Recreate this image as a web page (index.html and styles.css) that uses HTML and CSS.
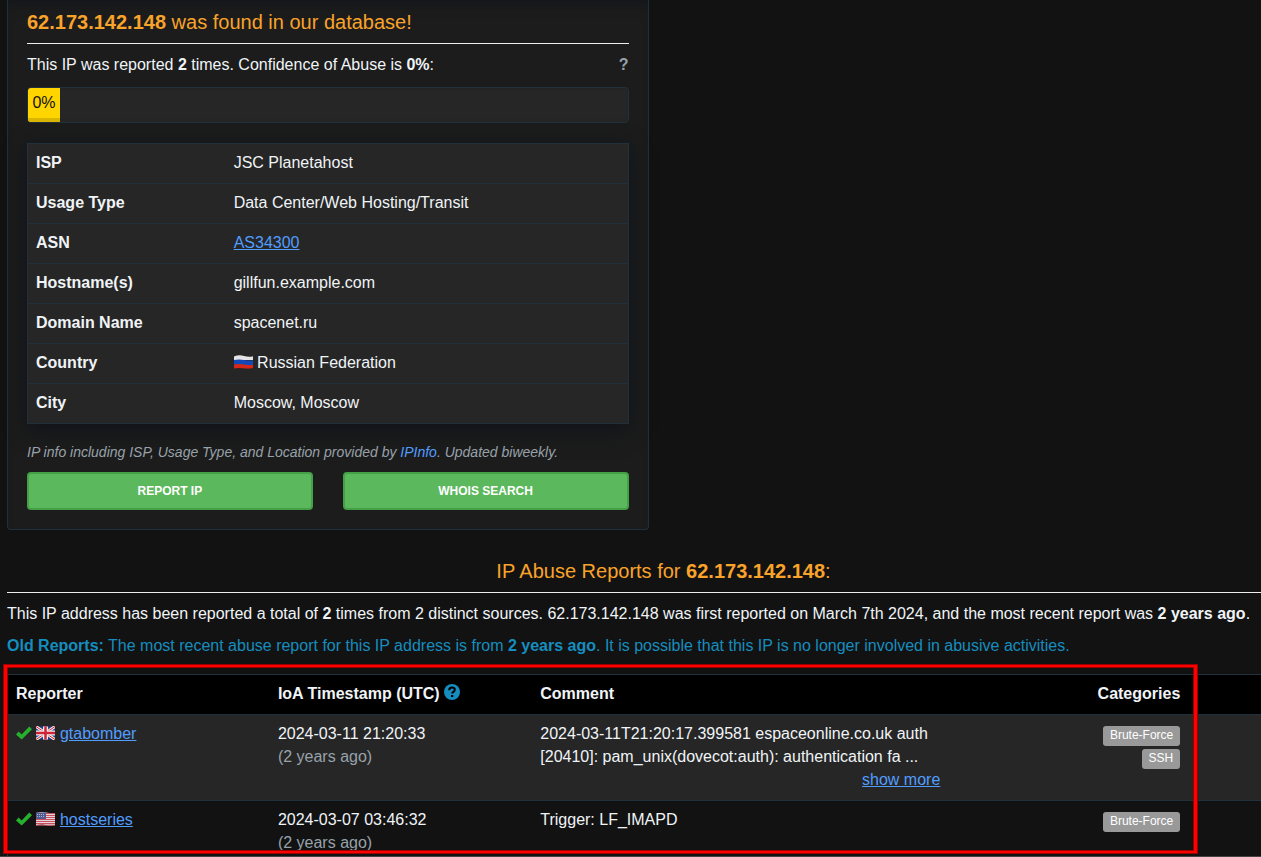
FILE: index.html
```html
<!DOCTYPE html>
<html lang="en">
<head>
  <meta charset="utf-8">
  <title>62.173.142.148 | IP Abuse Reports</title>
  <link rel="stylesheet" href="styles.css">
</head>
<body>
  <main class="container">
    <div class="row">
      <section class="well">
        <h3 class="title"><b>62.173.142.148</b> was found in our database!</h3>
        <div class="confidence">
          <p>This IP was reported <b>2</b> times. Confidence of Abuse is <b>0%</b>:</p>
          <b class="help">?</b>
        </div>
        <div class="progress">
          <div class="progress-bar">0%</div>
        </div>

        <table class="info">
          <tr>
            <th>ISP</th>
            <td>JSC Planetahost</td>
          </tr>
          <tr>
            <th>Usage Type</th>
            <td>Data Center/Web Hosting/Transit</td>
          </tr>
          <tr>
            <th>ASN</th>
            <td><a href="#">AS34300</a></td>
          </tr>
          <tr>
            <th>Hostname(s)</th>
            <td>gillfun.example.com</td>
          </tr>
          <tr>
            <th>Domain Name</th>
            <td>spacenet.ru</td>
          </tr>
          <tr>
            <th>Country</th>
            <td>
              <svg class="flag" viewBox="0 0 19 14">
                <path fill="#e4e4e4" d="M0 1.500Q5-.5 10 1t9 .3V5H0z"/>
                <path fill="#1448b8" d="M0 5Q5 4 10 5t9 .2V10H0z"/>
                <path fill="#d62718" d="M0 9.500Q5 8.500 10 9.500t9 .2V13Q14 14 9 13.300T0 13.500z"/>
              </svg>
              Russian Federation
            </td>
          </tr>
          <tr>
            <th>City</th>
            <td>Moscow, Moscow</td>
          </tr>
        </table>

        <p class="note">IP info including ISP, Usage Type, and Location provided by <a href="#">IPInfo</a>. Updated biweekly.</p>
        <div class="buttons">
          <button type="button" class="btn">REPORT IP</button>
          <button type="button" class="btn">WHOIS SEARCH</button>
        </div>
      </section>
    </div>

    <h3 class="title reports-title">IP Abuse Reports for <b>62.173.142.148</b>:</h3>
    <p class="summary">This IP address has been reported a total of <b>2</b> times from 2 distinct sources. 62.173.142.148 was first reported on March 7th 2024, and the most recent report was <b>2 years ago</b>.</p>
    <p class="summary old"><b>Old Reports:</b> The most recent abuse report for this IP address is from <b>2 years ago</b>. It is possible that this IP is no longer involved in abusive activities.</p>

    <div class="reports-wrap">
      <table class="reports">
        <thead>
          <tr>
            <th class="col-reporter">Reporter</th>
            <th class="col-time">IoA Timestamp (UTC)
              <svg class="icon-help" viewBox="0 0 16 16">
                <circle cx="8" cy="8" r="8" fill="#168dbf"/>
                <path d="M5.200 6.200Q5.200 3.500 8 3.500t2.800 2.300Q10.800 7.300 9.300 8 8.200 8.500 8.200 9.500" fill="none" stroke="#000" stroke-width="2"/>
                <path d="M7 11h2.300v2H7z"/>
              </svg>
            </th>
            <th class="col-comment">Comment</th>
            <th class="col-cats">Categories</th>
            <th class="col-actions"></th>
          </tr>
        </thead>
        <tbody>
          <tr>
            <td>
              <svg class="icon-ok" viewBox="0 0 16 14"><path d="M0 8.500 2.600 5.600 5.600 8.500 13.300.5 16 3.200 5.700 13.600z"/></svg>
              <svg class="flag" viewBox="0 0 19 14">
                <path fill="#23408e" d="M0 .5h19v13H0z"/>
                <path stroke="#eee" stroke-width="3" d="M0 .5l19 13M19 .5l-19 13"/>
                <path stroke="#d22" stroke-width="1" d="M0 .5l19 13M19 .5l-19 13"/>
                <path stroke="#eee" stroke-width="5" d="M9.500 .5v13M0 7h19"/>
                <path stroke="#d22239" stroke-width="2.500" d="M9.500 .5v13M0 7h19"/>
              </svg>
              <a href="#">gtabomber</a>
            </td>
            <td>2024-03-11 21:20:33<br><span class="muted">(2 years ago)</span></td>
            <td>
              <div class="comment">2024-03-11T21:20:17.399581 espaceonline.co.uk auth<br>[20410]: pam_unix(dovecot:auth): authentication fa ...
                <a href="#" class="more">show more</a>
              </div>
            </td>
            <td class="cats"><span class="label">Brute-Force</span><span class="label">SSH</span></td>
            <td></td>
          </tr>
          <tr>
            <td>
              <svg class="icon-ok" viewBox="0 0 16 14"><path d="M0 8.500 2.600 5.600 5.600 8.500 13.300.5 16 3.200 5.700 13.600z"/></svg>
              <svg class="flag" viewBox="0 0 19 14">
                <path fill="#e6d5d8" d="M0 1Q5-.5 10 .5t9 .5v12q-5 1-9.500 0T0 13.500z"/>
                <path stroke="#c8505e" stroke-width="1" d="M9 1.500h10M9 3.500h10M9 5.500h10M0 7.500h19M0 9.500h19M0 11.500h19M0 13.200h19"/>
                <path fill="#525a92" d="M0 .5h10v6.500H0z"/>
                <path stroke="#a9aece" stroke-width="1" stroke-dasharray="1 1" d="M1 2.500h8M1 4.500h8"/>
              </svg>
              <a href="#">hostseries</a>
            </td>
            <td>2024-03-07 03:46:32<br><span class="muted">(2 years ago)</span></td>
            <td><div class="comment">Trigger: LF_IMAPD</div></td>
            <td class="cats"><span class="label">Brute-Force</span></td>
            <td></td>
          </tr>
        </tbody>
      </table>
      <div class="highlight"></div>
    </div>
  </main>
</body>
</html>
```
FILE: styles.css
```css
* {
  box-sizing: border-box;
}

body {
  font-family: "Liberation Sans", Arial, sans-serif;
  font-size: 16px;
  line-height: 23px;
  margin: 0;
  height: 100vh;
  overflow: hidden;
  color: #f0f4f7;
  background-color: #121212;
  border-bottom: 1px solid #444;
}

p,
h3 {
  margin: 0;
}

a {
  color: #519dff;
}

/* the content runs on past the right side of the window */
.container {
  margin-left: 7px;
  margin-right: -59px;
}

.row {
  display: grid;
  grid-template-columns: 1fr 1fr;
  gap: 30px;
}

.well {
  padding: 11px 19px 19px;
  background-color: #1c1c1c;
  border: 1px solid #21303b;
  border-top: none;
  border-radius: 0 0 4px 4px;
  box-shadow: inset 0 12px 12px -8px #14161c;
}

.title {
  padding-bottom: 10px;
  border-bottom: 1px solid #eee;
  color: #f9a32a;
  font-size: 20px;
  line-height: 22px;
  font-weight: normal;
}

.confidence {
  display: flex;
  justify-content: space-between;
  margin: 9px 0 11px;
}

.help {
  color: #98a2aa;
}

.progress {
  height: 36px;
  background-color: #262626;
  border: 1px solid #21303b;
  border-radius: 4px;
  overflow: hidden;
  box-shadow: inset 0 1px 2px rgba(0, 0, 0, 0.1);
}

.progress-bar {
  width: 32px;
  height: 100%;
  line-height: 30px;
  text-align: center;
  color: #111;
  background-color: #ffd500;
  box-shadow: inset 0 -4px 0 #dbb600;
}

table {
  width: 100%;
  border-collapse: collapse;
}

th,
td {
  padding: 7px 8px 9px;
  text-align: left;
  vertical-align: top;
}

.info {
  margin-top: 20px;
  background-color: #262626;
  border: 1px solid #21303b;
  box-shadow: 0 5px 20px #0e1219;
}

.info tr {
  border-top: 1px solid #21303b;
}

.info th {
  width: 33%;
}

.note {
  margin: 17px 0 8px;
  color: #98a2aa;
  font-size: 14px;
  font-style: italic;
}

.note a {
  text-decoration: none;
}

.buttons {
  display: grid;
  grid-template-columns: 1fr 1fr;
  gap: 30px;
}

.btn {
  height: 38px;
  font-family: inherit;
  font-size: 12px;
  font-weight: bold;
  color: #fff;
  background-color: #5cb85c;
  border: 2px solid #43a047;
  border-radius: 4px;
  cursor: pointer;
}

.reports-title {
  margin-top: 30px;
  text-align: center;
}

.summary {
  margin-top: 9px;
}

.old {
  color: #168dbf;
}

.reports-wrap {
  position: relative;
  margin-top: 17px;
}

.reports {
  table-layout: fixed;
  border: 1px solid #21303b;
}

.reports tr {
  border-top: 1px solid #21303b;
}

.reports thead {
  background-color: #000;
}

.reports tbody tr:nth-child(odd) {
  background-color: #262626;
}

.col-reporter,
.col-time {
  width: 20%;
}

.col-comment {
  width: 40%;
}

.col-cats,
.col-actions {
  width: 10%;
}

.col-cats {
  text-align: right;
}

.flag {
  width: 19px;
  height: 14px;
  vertical-align: -1px;
}

.icon-ok {
  width: 16px;
  height: 14px;
  fill: #26b12d;
  vertical-align: -1px;
}

.icon-help {
  width: 16px;
  height: 16px;
  vertical-align: -1px;
}

.muted {
  color: #98a2aa;
}

.comment {
  width: 400px;
}

.more {
  display: block;
  text-align: right;
}

.cats {
  display: flex;
  flex-direction: column;
  align-items: flex-end;
  gap: 3px;
  padding-top: 11px;
}

.label {
  height: 20px;
  padding: 0 7px;
  font-size: 12px;
  line-height: 18px;
  color: #fff;
  background-color: #999;
  border-radius: 3px;
}

/* red frame over the reports */
.highlight {
  position: absolute;
  top: -9px;
  left: -3px;
  right: 123px;
  height: 188px;
  border: 2px solid #f00;
  border-width: 2px 3px;
  box-shadow: 0 0 0 1px #900, inset 0 0 0 1px #900;
  pointer-events: none;
}
```
